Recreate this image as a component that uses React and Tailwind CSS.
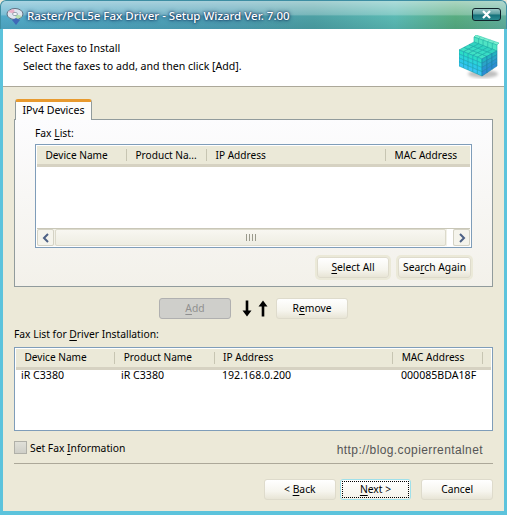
const Btn = ({ children, className = "" }) => (
  <div className={"h-[21px] flex items-center justify-center rounded-[3px] border border-[#dedbcc] bg-[linear-gradient(180deg,#ffffff_0%,#f6f5ee_60%,#e8e5d6_100%)] text-[10.3px] text-black " + className}>
    {children}
  </div>
);

const U = ({ children }) => <span className="underline underline-offset-2">{children}</span>;

const Header = ({ cols, pl, top }) => (
  <div className="h-[21px] flex shrink-0 bg-[#ebe9d8] border-b-[3px] border-[#d6d2c2]">
    {cols.map((c) => (
      <div key={c.t} style={{ width: c.w, paddingLeft: pl, paddingTop: top }} className="h-full flex items-center relative text-[10.1px] text-black whitespace-nowrap overflow-hidden">
        {c.t}
        {c.sep !== false && <div className="absolute right-0 top-[3px] bottom-[3px] w-[1px] bg-[#c7c5b2]" />}
      </div>
    ))}
  </div>
);

const lerp = (a, b, t) => a + (b - a) * t;
const quad = (p, q, r, s, u0, u1, v0, v1) => {
  const at = (u, v) => {
    const tx = lerp(p[0], q[0], u), ty = lerp(p[1], q[1], u);
    const bx = lerp(s[0], r[0], u), by = lerp(s[1], r[1], u);
    return `${lerp(tx, bx, v).toFixed(2)},${lerp(ty, by, v).toFixed(2)}`;
  };
  return `${at(u0, v0)} ${at(u1, v0)} ${at(u1, v1)} ${at(u0, v1)}`;
};

const Face = ({ p, q, r, s, nu, nv, colors, stroke, k }) => {
  const out = [];
  for (let i = 0; i < nu; i++) {
    for (let j = 0; j < nv; j++) {
      out.push(
        <polygon
          key={`${k}${i}${j}`}
          points={quad(p, q, r, s, i / nu, (i + 1) / nu, j / nv, (j + 1) / nv)}
          fill={colors[Math.min(colors.length - 1, Math.floor((j / nv) * colors.length))]}
          stroke={stroke}
          strokeWidth="0.6"
        />
      );
    }
  }
  return <>{out}</>;
};

const Cube = () => (
  <svg width="42" height="44" viewBox="0 0 42 44" className="shrink-0">
    <ellipse cx="24" cy="39" rx="15" ry="4" fill="#00000040" className="blur-[1.5px]" />
    <Face k="bt" p={[15, 2]} q={[38, 10]} r={[40, 8]} s={[17, 0]} nu={5} nv={1} colors={["#7cf0d0"]} stroke="#30c8ac" />
    <Face k="b" p={[15, 2]} q={[38, 10]} r={[38, 16]} s={[15, 7]} nu={5} nv={1} colors={["#4ee4c4"]} stroke="#1fb4a4" />
    <Face k="t" p={[0, 15]} q={[23, 24]} r={[38, 16]} s={[15, 7]} nu={5} nv={3} colors={["#3fe0c4", "#38dcc4", "#30d4c0"]} stroke="#16a8a4" />
    <Face k="l" p={[0, 15]} q={[23, 24]} r={[23, 41]} s={[0, 31]} nu={5} nv={4} colors={["#2bdcc6", "#2bd4d8", "#2cc8e8", "#38c4f4"]} stroke="#17a4b4" />
    <Face k="r" p={[23, 24]} q={[38, 16]} r={[38, 31]} s={[23, 41]} nu={3} nv={4} colors={["#22b4c0", "#2aa4c8", "#2a94d0", "#2e8cd4"]} stroke="#1a84a8" />
  </svg>
);

const Arrow = ({ up }) => (
  <svg width="10" height="17" viewBox="0 0 10 17" className={up ? "" : "rotate-180"}>
    <path d="M5 0.5 L9.5 6.5 H6.3 V16.5 H3.7 V6.5 H0.5 Z" fill="#000" />
  </svg>
);

export default function App() {
  return (
    <div className="w-[507px] h-[515px] flex flex-col overflow-hidden font-['Noto_Sans',sans-serif] bg-[#ece9d8]">
      {/* Title bar */}
      <div className="h-[29px] shrink-0 flex items-center pl-[5px] pr-[5px] rounded-t-[6px] border border-[#3d8ea3] border-b-0 bg-[linear-gradient(180deg,rgba(255,255,255,0.5)_0%,rgba(255,255,255,0.25)_48%,rgba(255,255,255,0)_54%,rgba(0,60,70,0.1)_100%),linear-gradient(90deg,#52aac8_0%,#4f9fb4_45%,#4ea0a4_62%,#5cbab4_78%,#58ac80_90%,#62b09c_100%)]">
        <svg width="19" height="19" viewBox="0 0 19 19" className="shrink-0 mt-[2px]">
          <ellipse cx="9" cy="7" rx="8" ry="5.5" fill="#dfe6f0" stroke="#5f6f80" strokeWidth="1" />
          <path d="M9 7 L2 5 A8 5.5 0 0 1 8 2 Z" fill="#e8b0c8" />
          <path d="M9 7 L16 9 A8 5.5 0 0 1 10 12 Z" fill="#b8e0b0" />
          <ellipse cx="9" cy="7" rx="2.5" ry="1.6" fill="#f4f6fa" stroke="#6a7a8a" strokeWidth="0.6" />
          <path d="M6 13 L10 18 L14 13 L10 11 Z" fill="#3f68b8" />
        </svg>
        <span className="ml-[2px] mt-[2px] text-[11.5px] text-white font-medium [text-shadow:0_0_2px_#0a2350,0_0_4px_#0a2350] whitespace-nowrap">
          Raster/PCL5e Fax Driver - Setup Wizard Ver. 7.00
        </span>
        <div className="ml-auto w-[29px] h-[13px] mb-[1px] rounded-[3px] border border-[#10222a] bg-[linear-gradient(180deg,#9cc8c8_0%,#5a9ea0_48%,#14707a_52%,#2a8a90_100%)] flex items-center justify-center">
          <svg width="9" height="9" viewBox="0 0 9 9">
            <path d="M1 1 L8 8 M8 1 L1 8" stroke="#fff" strokeWidth="2.2" />
          </svg>
        </div>
      </div>

      {/* Body */}
      <div className="flex-1 min-h-0 flex flex-col border-x-[3px] border-b-[4px] border-[#5cc3dc]">
        {/* Header */}
        <div className="h-[58px] shrink-0 bg-white border-b border-[#aca899] flex items-start justify-between pr-[3px] pl-[11px] text-[10.6px] text-black">
          <div>
            <div className="mt-[10px] leading-[18px]">Select Faxes to Install</div>
            <div className="ml-[9px] leading-[18px]">Select the faxes to add, and then click [Add].</div>
          </div>
          <div className="mt-[6px]">
            <Cube />
          </div>
        </div>

        <div className="flex-1 min-h-0 flex flex-col pl-[11px] pr-[11px]">
          {/* Tab */}
          <div className="mt-[12px] ml-[1px] w-[77px] h-[21px] relative z-10 -mb-[1px] rounded-t-[3px] border-x border-[#919b9c] border-t-[3px] border-t-[#e89a2e] bg-[#fdfdfb] flex items-center justify-center text-[10.6px] text-black">
            IPv4 Devices
          </div>
          {/* Panel */}
          <div className="h-[168px] shrink-0 border border-[#919b9c] bg-[linear-gradient(180deg,#fcfcfe_0%,#f3f1ea_100%)] flex flex-col pl-[20px] pr-[20px]">
            <div className="mt-[6px] h-[16px] flex items-center text-[10.3px] text-black">
              <span>Fax <U>L</U>ist:</span>
            </div>
            <div className="mt-[2px] h-[104px] shrink-0 border border-[#7f9db9] bg-white flex flex-col p-[1px]">
              <Header
                pl={8.5}
                top={2}
                cols={[
                  { t: "Device Name", w: 90 },
                  { t: "Product Na...", w: 80 },
                  { t: "IP Address", w: 179 },
                  { t: "MAC Address", w: 83, sep: false },
                ]}
              />
              <div className="flex-1" />
              <div className="h-[18px] shrink-0 flex items-stretch border-t border-[#c9c7b8] bg-[#f2f1e8]">
                <div className="w-[17px] flex items-center justify-center rounded-[2px] border border-[#d4d2c4] bg-[#f5f4ec]">
                  <svg width="8" height="10" viewBox="0 0 8 10"><path d="M6 1 L2 5 L6 9" fill="none" stroke="#4d6185" strokeWidth="2" /></svg>
                </div>
                <div className="flex-1 mx-[1px] flex items-center justify-center rounded-[2px] border border-[#dcdacb] bg-[linear-gradient(180deg,#f8f7f1_0%,#eeede2_100%)]">
                  <div className="flex gap-[1px]">
                    <div className="w-[1px] h-[7px] bg-[#9a9a8c]" />
                    <div className="w-[1px] h-[7px] bg-[#9a9a8c] ml-[1px]" />
                    <div className="w-[1px] h-[7px] bg-[#9a9a8c] ml-[1px]" />
                    <div className="w-[1px] h-[7px] bg-[#9a9a8c] ml-[1px]" />
                  </div>
                </div>
                <div className="w-[6px] bg-white" />
                <div className="w-[17px] flex items-center justify-center rounded-[2px] border border-[#d4d2c4] bg-[#f5f4ec]">
                  <svg width="8" height="10" viewBox="0 0 8 10"><path d="M2 1 L6 5 L2 9" fill="none" stroke="#4d6185" strokeWidth="2" /></svg>
                </div>
              </div>
            </div>
            <div className="mt-[9px] flex justify-end gap-[9px] pr-[1px]">
              <Btn className="w-[72px] ring-2 ring-[#ebe9d8]"><span><U>S</U>elect All</span></Btn>
              <Btn className="w-[73px] ring-2 ring-[#ebe9d8]"><span>Sea<U>r</U>ch Again</span></Btn>
            </div>
          </div>

          {/* Add/remove */}
          <div className="mt-[11px] h-[21px] shrink-0 flex items-center pl-[145px]">
            <div className="w-[72px] h-[21px] flex items-center justify-center rounded-[3px] border border-[#b0b0b0] bg-[#cfcfcb] text-[10.3px] text-[#8f8f8f]">
              <span><U>A</U>dd</span>
            </div>
            <div className="ml-[11px] mr-[8px] flex items-center gap-[6px]">
              <Arrow />
              <Arrow up />
            </div>
            <Btn className="w-[72px]"><span>R<U>e</U>move</span></Btn>
          </div>

          <div className="mt-[8px] h-[16px] flex items-center text-[10.3px] text-black">
            <span>Fax List for <U>D</U>river Installation:</span>
          </div>
          {/* List 2 */}
          <div className="mt-[4px] h-[84px] shrink-0 border border-[#7f9db9] bg-white flex flex-col p-[1px]">
            <Header
              pl={8.5}
              top={0}
              cols={[
                { t: "Device Name", w: 100 },
                { t: "Product Name", w: 100 },
                { t: "IP Address", w: 180 },
                { t: "MAC Address", w: 90 },
                { t: " ", w: 5, sep: false },
              ]}
            />
            <div className="flex h-[12px] items-center text-[10.6px] text-black">
              <div className="w-[100px] pl-[5px]">iR C3380</div>
              <div className="w-[100px] pl-[5px]">iR C3380</div>
              <div className="w-[180px] pl-[6px]">192.168.0.200</div>
              <div className="pl-[5px]">000085BDA18F</div>
            </div>
          </div>

          {/* Checkbox row */}
          <div className="mt-[9px] h-[14px] shrink-0 flex items-center">
            <div className="w-[13px] h-[13px] border border-[#b0b0a8] bg-[linear-gradient(180deg,#e0e0d8_0%,#cfcfc8_100%)]" />
            <span className="ml-[3px] mt-[3px] text-[10.3px] text-black">
              Set Fax <U>I</U>nformation
            </span>
            <span className="ml-auto mr-[10px] mt-[5px] font-['Liberation_Sans',sans-serif] text-[12px] tracking-[0.4px] text-[#555]">
              http://blog.copierrentalnet
            </span>
          </div>

          <div className="mt-[9px] h-[1px] shrink-0 bg-[#aca899]" />

          {/* Bottom buttons */}
          <div className="mt-[15px] flex pl-[250px]">
            <Btn className="w-[72px]"><span>&lt; <U>B</U>ack</span></Btn>
            <div className="ml-[4px] w-[72px] h-[21px] rounded-[3px] border border-[#9fe0ea] bg-[linear-gradient(180deg,#ffffff_0%,#f4f3ea_100%)] p-[1px]">
              <div className="w-full h-full flex items-center justify-center border border-dotted border-black text-[10.3px] text-black">
                <span><U>N</U>ext &gt;</span>
              </div>
            </div>
            <Btn className="ml-[10px] w-[72px]">Cancel</Btn>
          </div>
        </div>
      </div>
    </div>
  );
}
